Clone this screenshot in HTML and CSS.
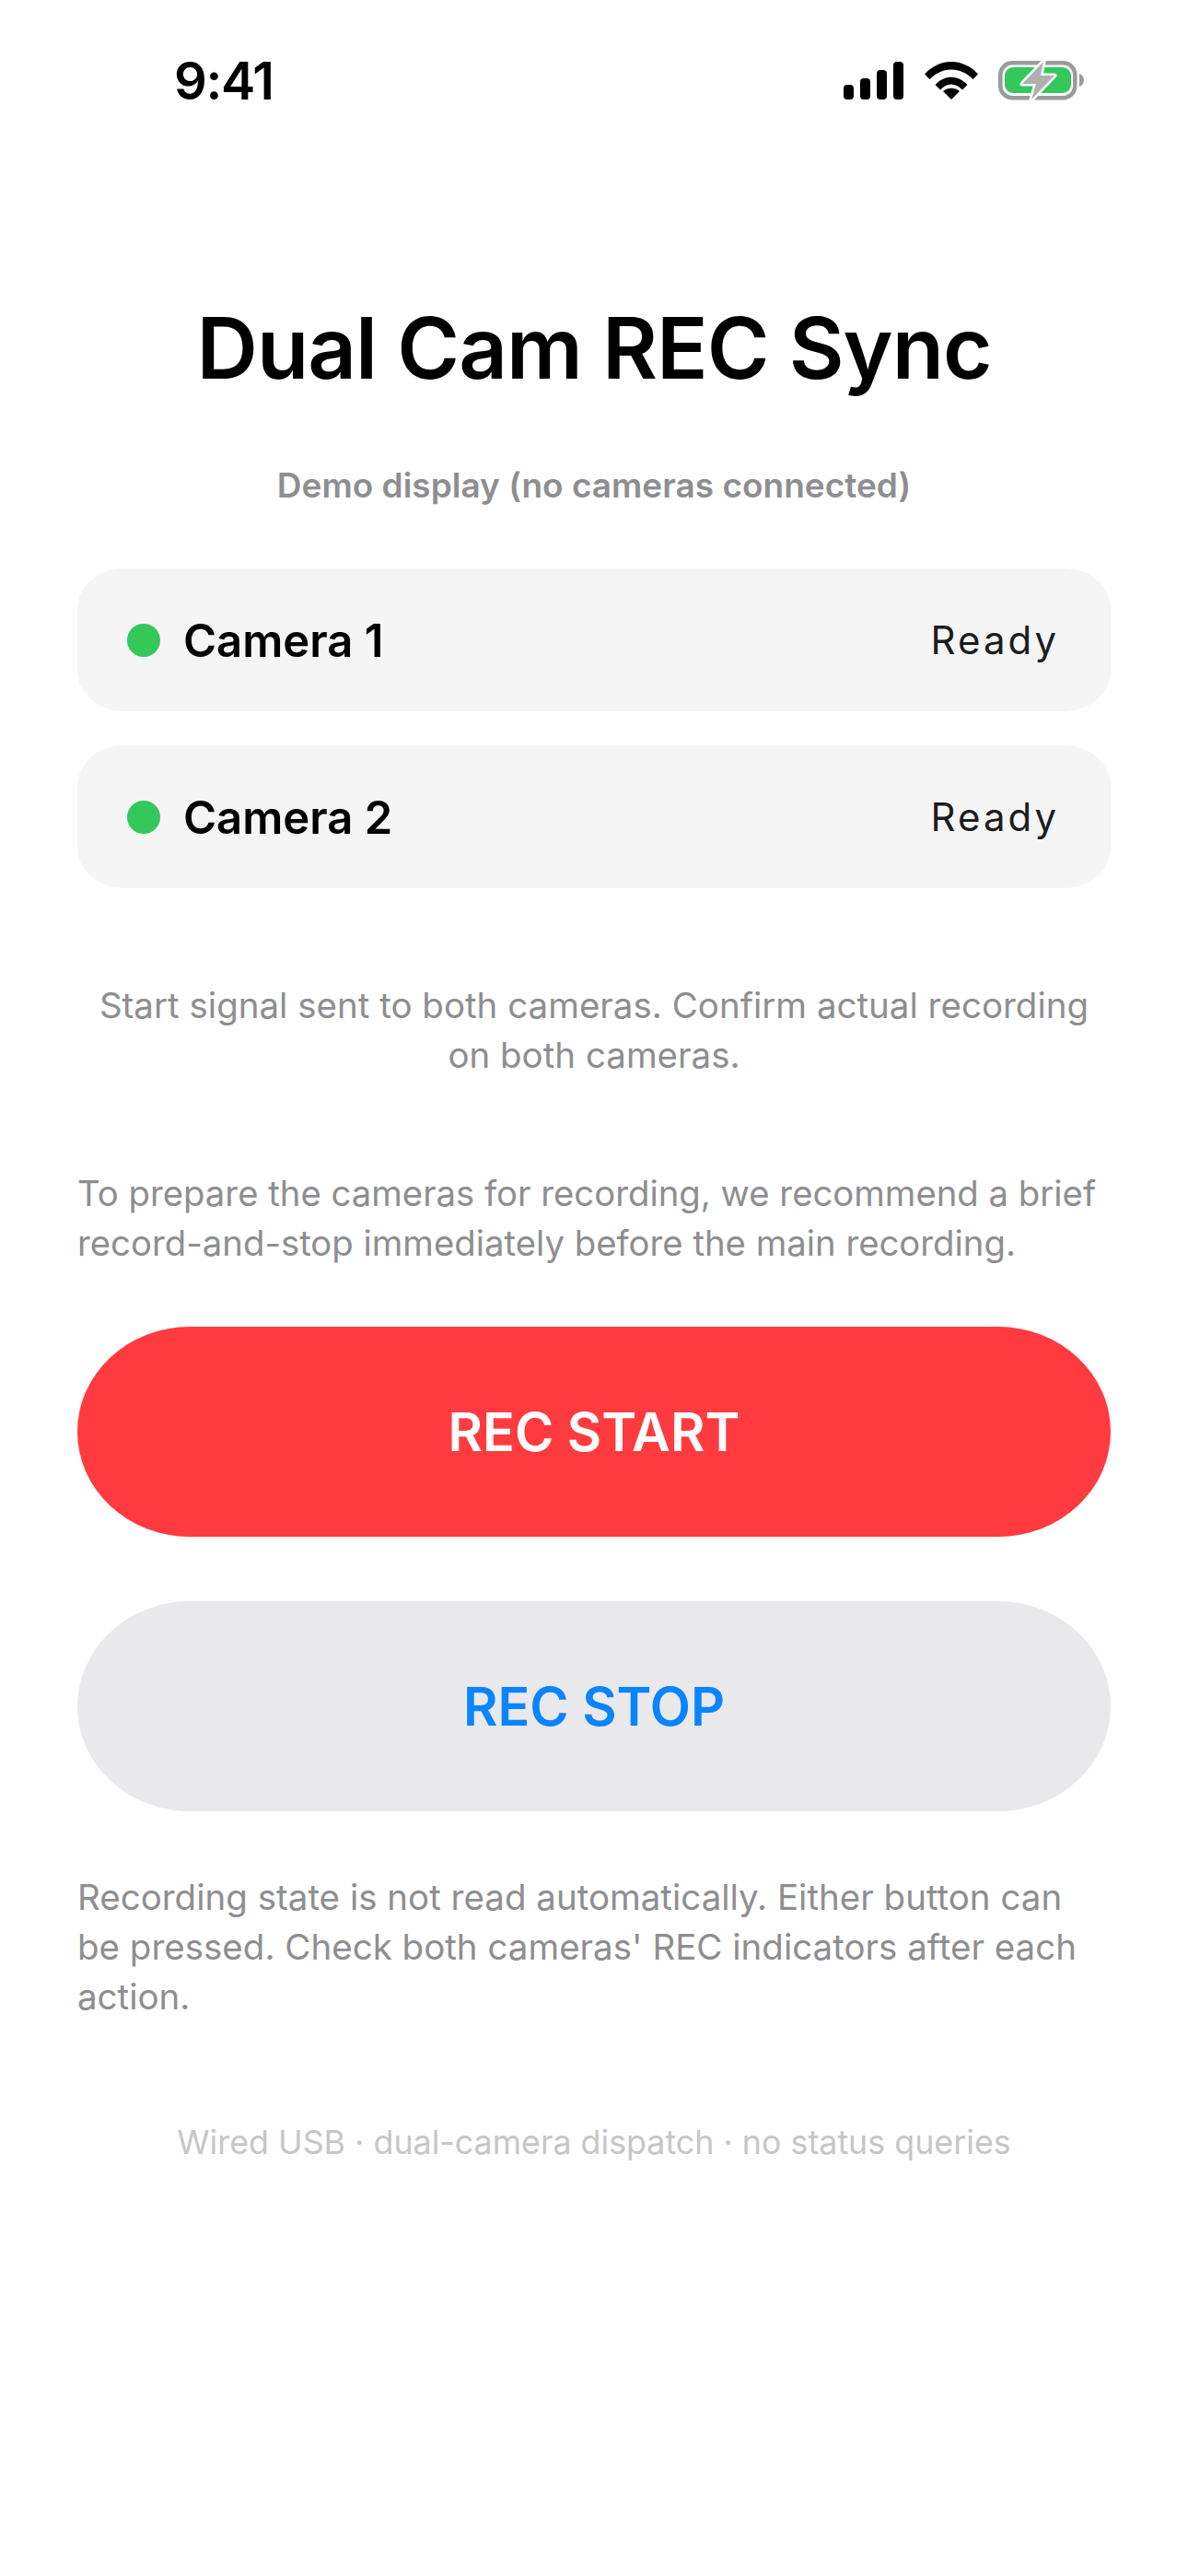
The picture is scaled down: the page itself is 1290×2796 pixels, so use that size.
FILE: index.html
```html
<!DOCTYPE html>
<html lang="en">
<head>
    <meta charset="UTF-8">
    <title>Dual Cam REC Sync</title>
    <link rel="stylesheet" href="styles.css">
</head>
<body>
    <div class="statusbar">
        <span class="time">9:41</span>
        <div class="status-icons">
            <svg class="signal" width="65" height="41" viewBox="0 0 65 41">
                <rect x="0" y="25" width="11" height="16" rx="4"/>
                <rect x="18" y="18" width="11" height="23" rx="4"/>
                <rect x="36" y="9" width="11" height="32" rx="4"/>
                <rect x="54" y="0" width="11" height="41" rx="4"/>
            </svg>
            <svg class="wifi" width="58" height="41" viewBox="0 0 58 41">
                <path d="M0 13.500C16 -4.500 42 -4.500 58 13.500L52.500 19C39 5 19 5 5.500 19Z"/>
                <path d="M11.500 25C22 14 36 14 46.500 25L41 30.500C33.500 22.500 24.500 22.500 17 30.500Z"/>
                <path d="M20 32C25 27.500 33 27.500 38 32L29 41Z"/>
            </svg>
            <svg class="battery" width="93" height="43" viewBox="0 0 93 43">
                <rect x="2.300" y="2.300" width="81" height="38" rx="13" fill="none" stroke="#9b9b9b" stroke-width="4.600"/>
                <rect x="7" y="7" width="72" height="28" rx="9" fill="#34c759"/>
                <path d="M88 14C91 15 93 18 93 21C93 24 91 27 88 28Z" fill="#9b9b9b"/>
                <path d="M49 1L26 25H41L36 42L61 16H46Z" fill="#b0b0b0" stroke="#fff" stroke-width="5" paint-order="stroke" stroke-linejoin="round"/>
            </svg>
        </div>
    </div>

    <main class="content">
        <h1 class="title">Dual Cam REC Sync</h1>
        <p class="subtitle">Demo display (no cameras connected)</p>

        <div class="camera-list">
            <div class="camera-row">
                <span class="dot"></span>
                <span class="camera-name">Camera 1</span>
                <span class="camera-state">Ready</span>
            </div>
            <div class="camera-row">
                <span class="dot"></span>
                <span class="camera-name">Camera 2</span>
                <span class="camera-state">Ready</span>
            </div>
        </div>

        <p class="note note-center">Start signal sent to both cameras. Confirm actual recording on both cameras.</p>
        <p class="note note-prepare">To prepare the cameras for recording, we recommend a brief record-and-stop immediately before the main recording.</p>

        <button class="rec-button rec-start">REC START</button>
        <button class="rec-button rec-stop">REC STOP</button>

        <p class="note note-state">Recording state is not read automatically. Either button can be pressed. Check both cameras' REC indicators after each action.</p>
        <p class="footer">Wired USB · dual-camera dispatch · no status queries</p>
    </main>
</body>
</html>
```
FILE: styles.css
```css
* {
    box-sizing: border-box;
}
body {
    margin: 0;
    background: #fff;
    font-family: Inter, "Liberation Sans", sans-serif;
    color: #000;
}
.statusbar {
    height: 130px;
    padding: 44px 113px 0 189px;
    display: flex;
    justify-content: space-between;
    align-items: center;
}
.time {
    padding-top: 2px;
    font-size: 56px;
    font-weight: 600;
    line-height: 60px;
    letter-spacing: -1.300px;
}
.status-icons {
    display: flex;
    align-items: center;
}
.signal,
.wifi {
    fill: #000;
}
.wifi {
    margin-left: 23px;
}
.battery {
    margin-left: 22px;
}
.content {
    padding: 0 84px;
}
.title {
    margin: 0;
    padding-top: 198px;
    font-size: 92px;
    line-height: 100px;
    font-weight: 600;
    letter-spacing: -1px;
    text-align: center;
}
.subtitle {
    margin: 77px 0 0;
    font-size: 37px;
    line-height: 44px;
    font-weight: 600;
    color: #8e8e90;
    text-align: center;
}
.camera-list {
    margin-top: 68px;
    display: flex;
    flex-direction: column;
    gap: 37px;
}
.camera-row {
    height: 155px;
    padding: 0 56px 0 54px;
    display: flex;
    align-items: center;
    background: #f5f5f5;
    border-radius: 50px / 44px;
}
.dot {
    width: 36px;
    height: 36px;
    border-radius: 50%;
    background: #34c759;
}
.camera-name {
    margin-left: 25px;
    padding-top: 2px;
    font-size: 49px;
    font-weight: 600;
}
.camera-state {
    margin-left: auto;
    font-size: 42px;
    letter-spacing: 3px;
    color: #1c1c1e;
}
.note {
    margin: 0;
    font-size: 38.500px;
    line-height: 54px;
    color: #8e8e90;
}
.note-center {
    margin-top: 100px;
    padding: 0 12px;
    text-align: center;
}
.note-prepare {
    margin-top: 96px;
    font-size: 38.300px;
}
.rec-button {
    display: block;
    width: 100%;
    height: 228px;
    border: 0;
    border-radius: 122px / 114px;
    font-family: inherit;
    font-size: 57.500px;
    font-weight: 600;
}
.rec-start {
    margin-top: 64px;
    background: #ff3b3f;
    color: #fff;
}
.rec-stop {
    margin-top: 70px;
    background: #e9e9eb;
    color: #0a84ff;
}
.note-state {
    margin-top: 66px;
}
.footer {
    margin: 109px 0 0;
    font-size: 35.800px;
    line-height: 44px;
    color: #c6c6c8;
    text-align: center;
}
```
